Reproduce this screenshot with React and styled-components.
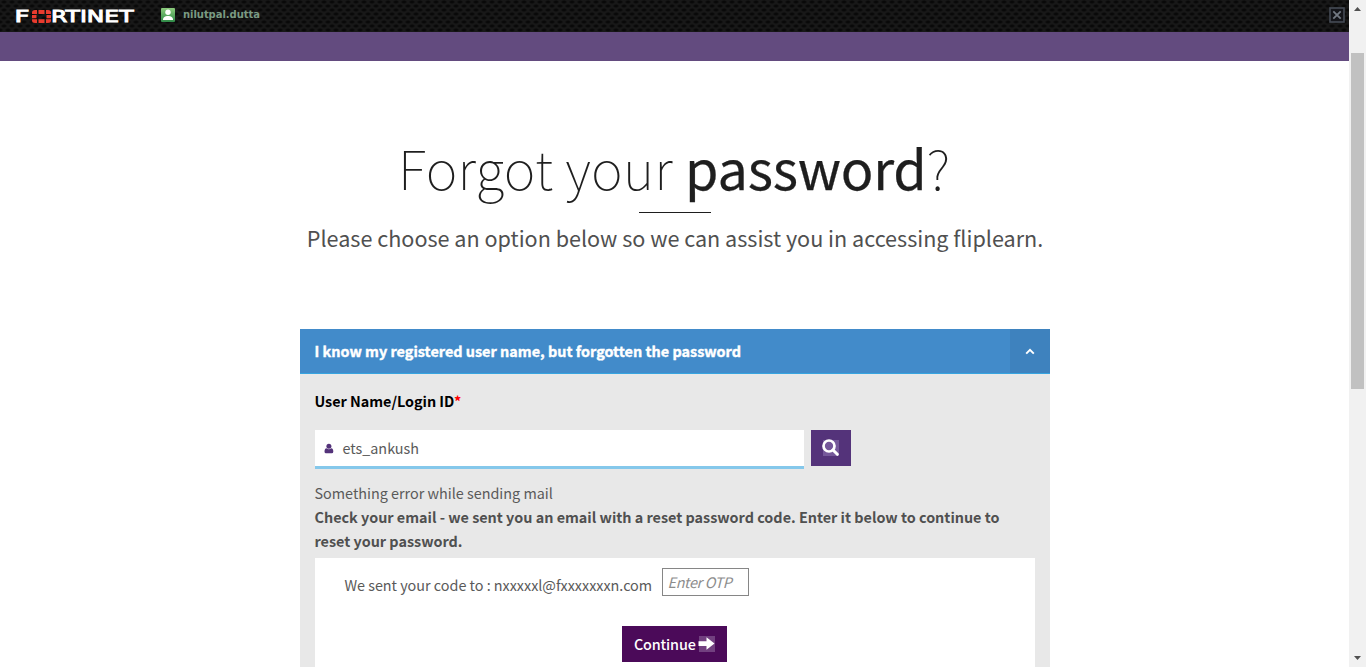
import React from "react";
import styled, { createGlobalStyle } from "styled-components";

const GlobalStyle = createGlobalStyle`
  *, *::before, *::after { box-sizing: border-box; }
  html, body { margin: 0; height: 100%; overflow: hidden; background: #fff; }
  body { font: 14.4px/24px "Noto Sans CJK SC", "Noto Sans", sans-serif; color: #505050; }
`;

const Screen = styled.div`
  display: flex;
  height: 667px;
  width: 1366px;
  overflow: hidden;
`;

const Page = styled.div`
  flex: 1;
  min-width: 0;
  overflow: hidden;
`;

const ProxyBar = styled.header`
  display: flex;
  align-items: flex-start;
  height: 32px;
  padding: 7px 4px 0 15px;
  background-color: #181818;
  background-image:
    radial-gradient(ellipse 3.2px 2px at 4px 2px, #090909 45%, transparent 100%),
    radial-gradient(ellipse 3.2px 2px at 0px 6px, #090909 45%, transparent 100%),
    radial-gradient(ellipse 3.2px 2px at 8px 6px, #090909 45%, transparent 100%);
  background-size: 8px 8px;
`;

const Logo = styled.svg`
  display: block;
  width: 122px;
  height: 24px;
  margin: -3px 24px 0 0;
  overflow: visible;
`;

const Avatar = styled.svg`
  display: block;
  width: 14px;
  height: 14px;
  margin: 1px 8px 0 0;
`;

const Account = styled.span`
  flex: 1;
  padding-top: 1px;
  font: bold 10px/14px "DejaVu Sans", Verdana, sans-serif;
  letter-spacing: -0.05px;
  color: #7a9a82;
`;

const CloseIcon = styled.svg`
  display: block;
  width: 16px;
  height: 16px;
`;

const BrandStrip = styled.div`
  height: 29px;
  background: #634b7f;
`;

const Main = styled.main`
  display: flex;
  flex-direction: column;
  align-items: center;
  padding: 73px 0 0 1px;
`;

const Title = styled.h1`
  margin: 0 1.6px 0 0;
  font-size: 54px;
  font-weight: 100;
  line-height: 66px;
  letter-spacing: 0.25px;
  color: #1e1e1e;
  white-space: nowrap;
`;

const Strong = styled.span`
  font-weight: 400;
  letter-spacing: -0.2px;
  -webkit-text-stroke: 0.25px #1e1e1e;
`;

const Rule = styled.div`
  width: 72px;
  height: 1px;
  margin-top: 12px;
  background: #1e1e1e;
`;

const Subtitle = styled.p`
  margin: 10px 0 76px;
  font-size: 21.6px;
  line-height: 30px;
  letter-spacing: -0.01px;
  white-space: nowrap;
`;

const Card = styled.section`
  width: 750px;
  background: #e8e8e8;
`;

const CardHead = styled.div`
  display: flex;
  height: 45px;
  border-bottom: 1px solid #36a4e0;
  background: #428bca;
`;

const CardTitle = styled.h2`
  flex: 1;
  margin: 0;
  padding: 10px 14.5px 0;
  font-size: 14.4px;
  font-weight: 700;
  letter-spacing: 0.01px;
  color: #fff;
  -webkit-text-stroke: 0.4px #fff;
`;

const Toggle = styled.button`
  display: flex;
  align-items: center;
  justify-content: center;
  width: 40px;
  padding: 0 1px 0 0;
  border: 0;
  background: #3e82be;
`;

const CardBody = styled.div`
  padding: 15px 15px 0;
`;

const Label = styled.label`
  display: block;
  margin-left: -0.5px;
  font-weight: 700;
  letter-spacing: -0.03px;
  color: #000;
`;

const Required = styled.span`
  color: #f00;
`;

const SearchRow = styled.div`
  display: flex;
  align-items: flex-start;
  gap: 7px;
  margin-top: 17px;
`;

const Field = styled.div`
  display: flex;
  width: 489px;
  height: 39px;
  padding: 6px 9px 0;
  border-bottom: 3px solid #85c8eb;
  background: #fff;
  color: #5a5a5a;
`;

const UserIcon = styled.svg`
  display: block;
  width: 10px;
  height: 11px;
  margin: 7px 8.4px 0 0;
`;

const SearchButton = styled.button`
  display: flex;
  width: 40px;
  height: 36px;
  padding: 8px 0 0 10px;
  border: 0;
  background: #54337a;
`;

const Messages = styled.div`
  margin: 12px 0 0 -0.5px;
`;

const Message = styled.p`
  margin: 0;
  font-weight: ${(p) => (p.$bold ? 700 : 400)};
  color: ${(p) => (p.$bold ? "#505050" : "#5a5a5a")};
  letter-spacing: -0.01px;
`;

const CodePanel = styled.div`
  display: flex;
  flex-direction: column;
  align-items: center;
  height: 140px;
  margin-top: 5px;
  padding: 10px 31px 0 29px;
  background: #fff;
`;

const CodeRow = styled.div`
  display: flex;
  align-items: flex-start;
  align-self: stretch;
  gap: 10px;
`;

const CodeText = styled.span`
  width: 308px;
  padding: 5px 0 0 0.4px;
  color: #5a5a5a;
  letter-spacing: -0.02px;
  white-space: nowrap;
`;

const OtpInput = styled.input`
  width: 87px;
  height: 28px;
  padding: 0 4.5px 1px;
  border: 1px solid #868686;
  border-radius: 0;
  background: #fff;
  font: italic 14.4px/24px "Noto Sans CJK SC", "Noto Sans", sans-serif;
  letter-spacing: -0.35px;
  &::placeholder { color: #8c8c8c; opacity: 1; }
`;

const ContinueButton = styled.button`
  display: flex;
  width: 105px;
  height: 36px;
  padding: 6px 0 0 12.4px;
  border: 0;
  background: #4b0a59;
  color: #fff;
  font: 500 14.4px/24px "Noto Sans CJK SC", "Noto Sans", sans-serif;
  letter-spacing: -0.15px;
`;

const ButtonIcon = styled.svg`
  display: block;
  flex: none;
  width: 18px;
  height: 18px;
  margin: ${(p) => p.$margin || 0};
`;

const CodeActions = styled.div`
  display: flex;
  justify-content: center;
  margin-top: 29px;
`;

const Scrollbar = styled.div`
  display: flex;
  flex-direction: column;
  align-items: center;
  justify-content: space-between;
  width: 17px;
  padding: 7px 0;
  background: #f1f1f1;
`;

const Thumb = styled.div`
  width: 13px;
  height: 336px;
  margin: 42px 0 auto;
  background: #c1c1c1;
`;

const Arrow = styled.svg`
  display: block;
  width: 7px;
  height: 4px;
`;

export default function App() {
  return (
    <Screen>
      <GlobalStyle />
      <Page>
        <ProxyBar>
          <Logo viewBox="0 -3 122 24">
            <g fill="#fff" stroke="#fff" strokeWidth="0.9" fontFamily="DejaVu Sans, sans-serif" fontSize="16.5">
              <text x="-0.500" y="15.4" textLength="15" lengthAdjust="spacingAndGlyphs">F</text>
              <text x="36" y="15.4" textLength="82.500" lengthAdjust="spacingAndGlyphs">RTINET</text>
            </g>
            <g fill="#ea3b2e">
              <path d="M17 7V5.500Q17 3 20 3H22V7zM23.500 3H29.500V7H23.500zM31 3H33Q36 3 36 5.500V7H31zM17 8H21.500V11.200H17zM31.500 8H36V11.200H31.500zM17 12.200H22V16H20Q17 16 17 13.500zM23.500 12.200H29.500V16H23.500zM31 12.200H36V13.500Q36 16 33 16H31z" />
            </g>
          </Logo>
          <Avatar viewBox="0 0 14 14">
            <defs>
              <linearGradient id="avatar" x1="0" y1="0" x2="0" y2="1">
                <stop offset="0" stopColor="#8ccb7c" />
                <stop offset="1" stopColor="#2f8a48" />
              </linearGradient>
            </defs>
            <rect width="14" height="14" rx="1" fill="url(#avatar)" />
            <circle cx="7" cy="4.300" r="2.700" fill="#fff" />
            <path d="M2 12C2 9 4 8 7 8S12 9 12 12z" fill="#fff" />
          </Avatar>
          <Account>nilutpal.dutta</Account>
          <CloseIcon viewBox="0 0 16 16">
            <rect x="1" y="1" width="14" height="14" fill="#14151a" stroke="#454b55" strokeWidth="1.6" />
            <path d="M4.300 4.300L11.700 11.700M11.700 4.300L4.300 11.700" stroke="#737a84" strokeWidth="1.8" />
          </CloseIcon>
        </ProxyBar>
        <BrandStrip />
        <Main>
          <Title>Forgot your <Strong>password</Strong>?</Title>
          <Rule />
          <Subtitle>Please choose an option below so we can assist you in accessing fliplearn.</Subtitle>
          <Card>
            <CardHead>
              <CardTitle>I know my registered user name, but forgotten the password</CardTitle>
              <Toggle aria-label="Collapse">
                <svg width="10" height="7" viewBox="0 0 10 7">
                  <path d="M1.200 5.600L5 1.900L8.800 5.600" fill="none" stroke="#fff" strokeWidth="2" />
                </svg>
              </Toggle>
            </CardHead>
            <CardBody>
              <Label>User Name/Login ID<Required>*</Required></Label>
              <SearchRow>
                <Field>
                  <UserIcon viewBox="0 0 10 11" fill="#54337a">
                    <circle cx="4.900" cy="3.300" r="2.500" />
                    <path d="M2.500 5.200Q4.900 7.300 7.300 5.200Q9.300 5.400 9.300 8.700Q9.200 10.300 7.800 10.300H2Q.6 10.300 .5 8.700Q.5 5.400 2.500 5.200z" />
                  </UserIcon>
                  <span>ets_ankush</span>
                </Field>
                <SearchButton aria-label="Search">
                  <ButtonIcon viewBox="0 0 18 18">
                    <rect x="2" y="2" width="16" height="16" fill="#75589a" />
                    <circle cx="8" cy="8" r="5.500" fill="none" stroke="#fff" strokeWidth="2.700" />
                    <path d="M12 12L16.300 16.300" stroke="#fff" strokeWidth="3" strokeLinecap="round" />
                  </ButtonIcon>
                </SearchButton>
              </SearchRow>
              <Messages>
                <Message>Something error while sending mail</Message>
                <Message $bold>
                  Check your email - we sent you an email with a reset password code. Enter it below to continue to reset your password.
                </Message>
              </Messages>
              <CodePanel>
                <CodeRow>
                  <CodeText>We sent your code to : nxxxxxl@fxxxxxxxn.com</CodeText>
                  <OtpInput placeholder="Enter OTP" />
                </CodeRow>
                <CodeActions>
                  <ContinueButton>
                    Continue
                    <ButtonIcon viewBox="0 0 18 18" $margin="2px 0 0 1px">
                      <rect x="2" y="2" width="16" height="16" fill="#724080" />
                      <path d="M1.500 7.200H9.500V3.300L17.500 9.500L9.500 15.700V12H1.500z" fill="#fff" />
                    </ButtonIcon>
                  </ContinueButton>
                </CodeActions>
              </CodePanel>
            </CardBody>
          </Card>
        </Main>
      </Page>
      <Scrollbar>
        <Arrow viewBox="0 0 7 4"><path d="M0 4L3.500 0L7 4z" fill="#505050" /></Arrow>
        <Thumb />
        <Arrow viewBox="0 0 7 4"><path d="M0 0L3.500 4L7 0z" fill="#505050" /></Arrow>
      </Scrollbar>
    </Screen>
  );
}
